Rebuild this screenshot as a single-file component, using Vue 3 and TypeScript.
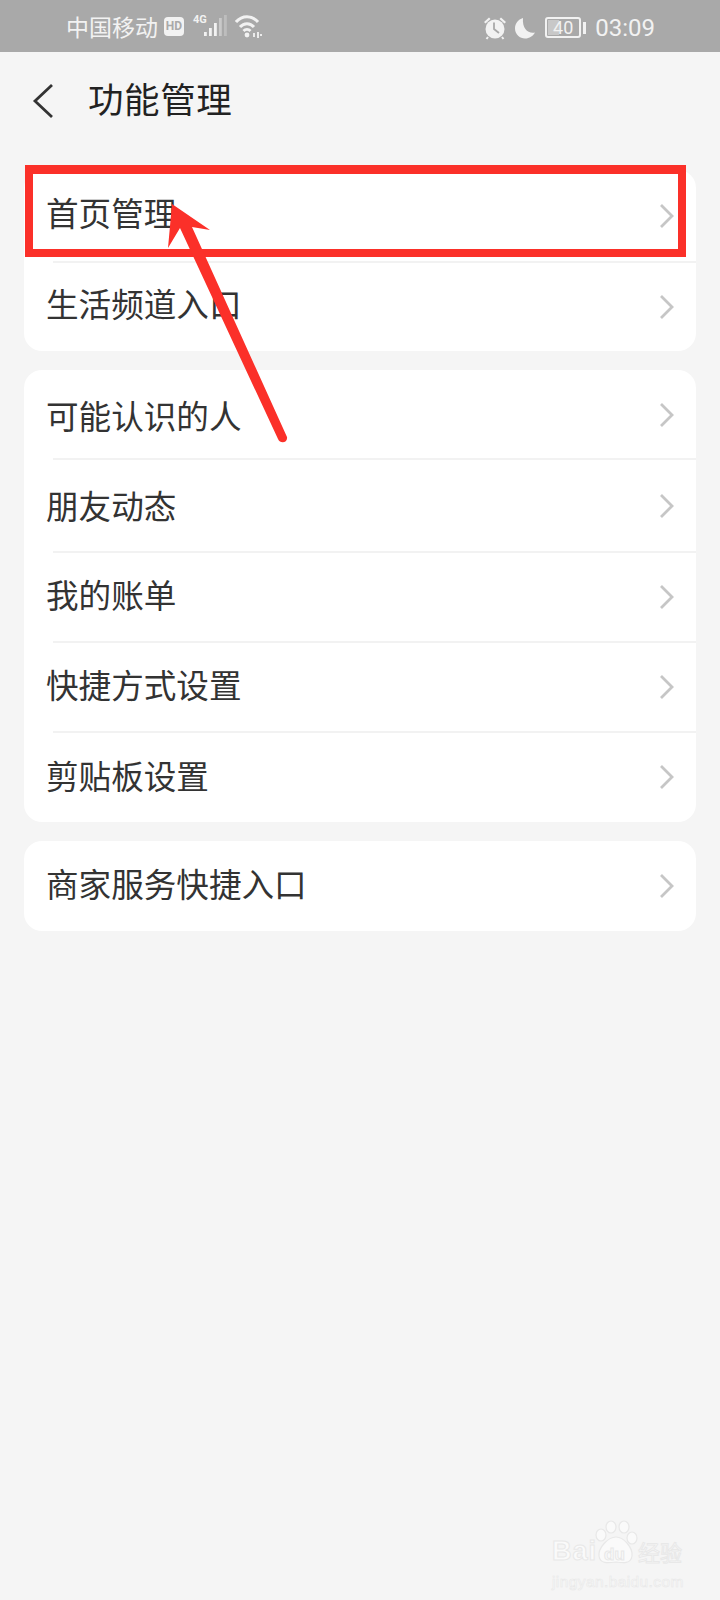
<script setup lang="ts">
type Row = { label: string; height: number; lift: number };
type Group = { rows: Row[] };

// 行高和文字偏移按截图量的
const groups: Group[] = [
  {
    rows: [
      { label: "首页管理", height: 92, lift: 10 },
      { label: "生活频道入口", height: 89, lift: 8 },
    ],
  },
  {
    rows: [
      { label: "可能认识的人", height: 89, lift: 1 },
      { label: "朋友动态", height: 93, lift: 2 },
      { label: "我的账单", height: 90, lift: 8 },
      { label: "快捷方式设置", height: 90, lift: 8 },
      { label: "剪贴板设置", height: 90, lift: 6 },
    ],
  },
  { rows: [{ label: "商家服务快捷入口", height: 90, lift: 8 }] },
];

const signalBars = [
  { x: 1, h: 4, fill: "#f2f2f2" },
  { x: 6, h: 8, fill: "#f2f2f2" },
  { x: 11, h: 13, fill: "#f2f2f2" },
  { x: 16, h: 18, fill: "#c9c9c9" },
  { x: 21, h: 21, fill: "#bdbdbd" },
];
</script>

<template>
  <div class="page">
    <div class="status">
      <div class="status-left">
        <span class="carrier">中国移动</span>
        <span class="hd">HD</span>
        <span class="net">4G</span>
        <svg class="signal" width="24" height="24" viewBox="0 0 24 24">
          <rect
            v-for="bar in signalBars"
            :key="bar.x"
            :x="bar.x - 1"
            :y="22 - bar.h"
            width="2.800"
            :height="bar.h"
            :fill="bar.fill"
          />
        </svg>
        <svg class="wifi" width="28" height="24" viewBox="0 0 28 24" fill="none" stroke="#f2f2f2" stroke-width="3">
          <path d="M1 8C7 1 17 1 23 8" />
          <path d="M5 13C9 8.500 15 8.500 19 13" />
          <path d="M8.500 17C10.500 15 13.500 15 15.500 17" />
          <circle cx="12" cy="21" r="2.400" fill="#f2f2f2" stroke="none" />
          <path d="M19 19V23M23 18V24M26 20V22" stroke-width="1.800" />
        </svg>
      </div>
      <div class="status-right">
        <svg width="24" height="24" viewBox="0 0 24 24" fill="#f2f2f2">
          <circle cx="12" cy="13" r="9.500" />
          <path d="M1 6L6 1.500L7.500 3L2.500 7.500ZM23 6L18 1.500L16.500 3L21.500 7.500Z" />
          <path d="M5 21L3.500 23M19 21L20.500 23" stroke="#f2f2f2" stroke-width="2" />
          <path d="M11 6.500V13L16 17" fill="none" stroke="#a9a9a9" stroke-width="1.800" />
        </svg>
        <svg class="moon" width="22" height="24" viewBox="0 0 22 24" fill="#f2f2f2">
          <path d="M9 2C4 3.500 1 7.500 1 12.500C1 18.500 6 22.500 11 22.500C15.500 22.500 19 20 21 16.500C14.500 18 8 13 9 2Z" />
        </svg>
        <div class="battery">
          <div class="battery-box">
            <i class="battery-fill"></i>
            <span>40</span>
          </div>
          <i class="battery-nub"></i>
        </div>
        <span class="clock">03:09</span>
      </div>
    </div>

    <header class="title-bar">
      <svg class="back" width="22" height="36" viewBox="0 0 22 36" fill="none" stroke="#333" stroke-width="2.800">
        <path d="M20 2L3 18L20 34" />
      </svg>
      <h1>功能管理</h1>
    </header>

    <main class="groups">
      <section v-for="(group, i) in groups" :key="i" class="card">
        <div
          v-for="row in group.rows"
          :key="row.label"
          class="row"
          :style="{ height: row.height + 'px' }"
        >
          <span :style="{ marginBottom: row.lift + 'px' }">{{ row.label }}</span>
          <svg width="15" height="26" viewBox="0 0 15 26" fill="none" stroke="#c6c6c6" stroke-width="2.800">
            <path d="M2 2L13 13L2 24" />
          </svg>
        </div>
      </section>
    </main>

    <!-- 标注：红框和箭头 -->
    <div class="mark-box"></div>
    <svg class="mark-arrow" width="720" height="480" viewBox="0 0 720 480">
      <path
        d="M172 204L210 230L192 227L287 437C288 443 280 444 278 439L180 228L168 248Z"
        fill="#fb3029"
      />
    </svg>

    <div class="watermark">
      <div class="wm-top">
        <span class="wm-bai">Bai</span>
        <span class="wm-paw">
          <svg width="44" height="48" viewBox="0 0 44 48" fill="#fafafa" stroke="#e8e8e8" stroke-width="1.200">
            <ellipse cx="7" cy="15" rx="5" ry="6" />
            <ellipse cx="17" cy="7" rx="5" ry="6" />
            <ellipse cx="30" cy="7" rx="5" ry="6" />
            <ellipse cx="38" cy="18" rx="5" ry="6" />
            <path d="M22 17C30 17 39 28 38 36C37 44 29 43 22 42C14 43 6 44 5 36C4 28 14 17 22 17Z" />
          </svg>
          <b>du</b>
        </span>
        <span class="wm-jy">经验</span>
      </div>
      <div class="wm-url">jingyan.baidu.com</div>
    </div>
  </div>
</template>

<style scoped>
.page {
  position: relative;
  width: 720px;
  height: 1600px;
  overflow: hidden;
  background: #f5f5f5;
  font-family: "Noto Sans CJK SC", "Noto Sans", sans-serif;
}

.status {
  height: 52px;
  box-sizing: border-box;
  padding: 0 65px 0 66px;
  display: flex;
  align-items: center;
  justify-content: space-between;
  background: #a9a9a9;
  color: #f2f2f2;
}
.status-left,
.status-right {
  display: flex;
  align-items: center;
}
.status-right {
  padding-top: 3px;
}
.carrier {
  font-size: 23px;
  line-height: 52px;
}
.hd {
  width: 20px;
  height: 19px;
  margin-left: 6px;
  border-radius: 4px;
  background: #f2f2f2;
  color: #a9a9a9;
  font: 700 12px/19px "Roboto", sans-serif;
  text-align: center;
}
.net {
  align-self: flex-start;
  margin: 14px 0 0 9px;
  font: 700 11px/12px "Roboto", sans-serif;
}
.signal {
  margin-left: -3px;
}
.wifi {
  margin-left: 7px;
}
.moon {
  margin-left: 7px;
}
.battery {
  display: flex;
  align-items: center;
  margin-left: 9px;
}
.battery-box {
  position: relative;
  width: 36px;
  height: 21px;
  box-sizing: border-box;
  border: 2px solid #f2f2f2;
  border-radius: 3px;
  text-align: center;
  font: 400 18px/17px "Roboto", sans-serif;
}
.battery-box span {
  position: relative;
}
.battery-fill {
  position: absolute;
  left: 1px;
  top: 1px;
  bottom: 1px;
  width: 11px;
  background: #c8c8c8;
}
.battery-nub {
  width: 3px;
  height: 12px;
  margin-left: 2px;
  background: #f2f2f2;
}
.clock {
  margin-left: 9px;
  font: 400 24px/46px "Roboto", sans-serif;
}

.title-bar {
  height: 98px;
  display: flex;
  align-items: center;
  padding-left: 32px;
}
.title-bar h1 {
  margin: -6px 0 0 34px;
  font-size: 35.500px;
  font-weight: 400;
  line-height: 90px;
  letter-spacing: 0.6px;
  color: #222;
}

.groups {
  margin-top: 20px;
  padding: 0 24px;
  display: flex;
  flex-direction: column;
  gap: 19px;
}
.card {
  background: #fff;
  border-radius: 18px;
  overflow: hidden;
}
.row {
  position: relative;
  box-sizing: border-box;
  padding: 0 22px 0 22px;
  display: flex;
  align-items: center;
  justify-content: space-between;
  font-size: 32.600px;
  color: #333;
}
.row + .row::before {
  content: "";
  position: absolute;
  left: 29px;
  right: 0;
  top: -1px;
  height: 2px;
  background: #f2f2f2;
}

.mark-box {
  position: absolute;
  left: 25px;
  top: 165px;
  width: 661px;
  height: 92px;
  box-sizing: border-box;
  border: 8px solid #fb3029;
  border-top-width: 9px;
}
.mark-arrow {
  position: absolute;
  left: 0;
  top: 0;
}

.watermark {
  position: absolute;
  left: 552px;
  top: 1522px;
  width: 134px;
  color: #fafafa;
  -webkit-text-stroke: 1px #e8e8e8;
}
.wm-top {
  display: flex;
  align-items: flex-end;
  height: 44px;
}
.wm-bai {
  font: 700 27px/30px "Liberation Sans", sans-serif;
  letter-spacing: 1px;
}
.wm-paw {
  position: relative;
  width: 44px;
  height: 44px;
  margin: 0 0 -2px -3px;
}
.wm-paw svg {
  display: block;
  margin-top: -4px;
}
.wm-paw b {
  position: absolute;
  left: 10px;
  top: 22px;
  font: 700 17px/18px "Liberation Sans", sans-serif;
}
.wm-jy {
  font-size: 22px;
  line-height: 30px;
}
.wm-url {
  margin-top: 7px;
  font: 400 15.500px/18px "Liberation Sans", sans-serif;
  letter-spacing: 0.4px;
  -webkit-text-stroke: 0.6px #e8e8e8;
}
</style>
